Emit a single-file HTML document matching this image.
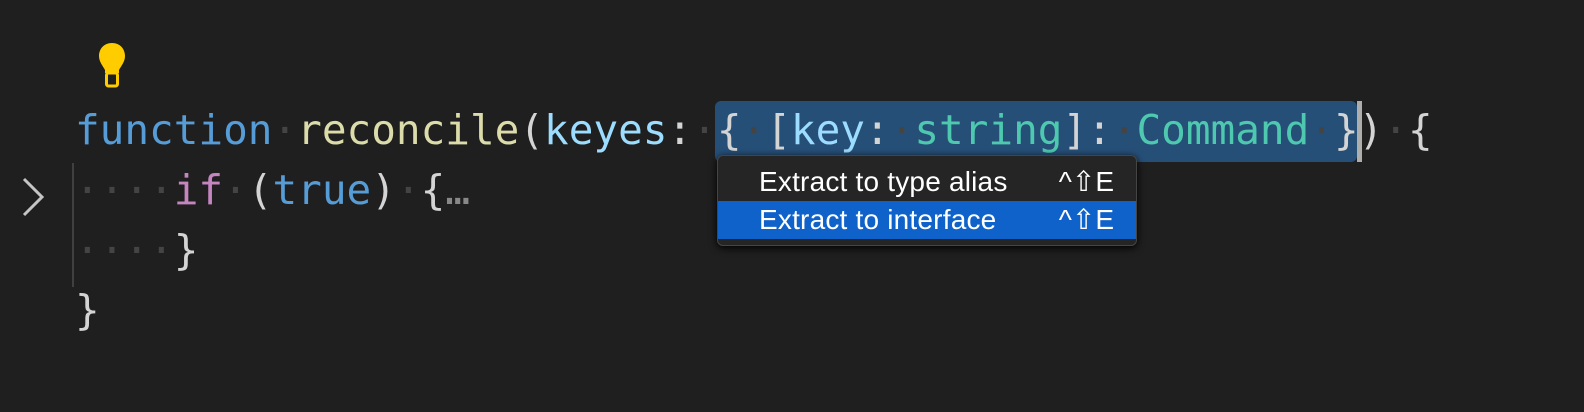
<!DOCTYPE html>
<html><head><style>
body{margin:0;width:1584px;height:412px;background:#1f1f1f;overflow:hidden;position:relative;font-family:"DejaVu Sans Mono",monospace;}
.l{position:absolute;left:75px;height:60px;line-height:60px;font-size:41px;white-space:pre;color:#d4d4d4}
.d{color:#444}
.kw{color:#569cd6}.fn{color:#dcdcaa}.pr{color:#9cdcfe}.ty{color:#4ec9b0}.ctl{color:#c586c0}
.sel{position:absolute;left:715px;top:101px;width:642px;height:61px;background:#264f78;border-radius:6px}
.cur{position:absolute;left:1357px;top:101px;width:5px;height:61px;background:#aeafad}
.menu{position:absolute;left:717px;top:155px;width:418px;height:89px;background:#252526;border:1px solid #454545;border-radius:6px;box-shadow:0 2px 8px #000;font-family:"Liberation Sans",sans-serif;font-size:28px;color:#fff}
.it{position:absolute;left:0;width:418px;height:38px;line-height:38px}
.it span{position:absolute;left:41px;letter-spacing:0.2px}
.it b{position:absolute;right:22px;font-weight:normal}
.guide{position:absolute;left:72px;top:163px;width:2px;height:124px;background:#404040}
</style></head><body>
<svg style="position:absolute;left:96px;top:42px" width="32" height="46" viewBox="0 0 32 46"><path d="M16 1C8 1 3 7 3 14c0 6 4 10 6 14v3h14v-3c2-4 6-8 6-14C29 7 24 1 16 1z" fill="#ffcc00"/><rect x="10.5" y="31" width="11" height="13" rx="2" fill="none" stroke="#ffcc00" stroke-width="3"/></svg>
<div class="sel"></div><div class="cur"></div>
<div class="guide"></div>
<svg style="position:absolute;left:20px;top:176px" width="26" height="42" viewBox="0 0 26 42"><path d="M4 3L22 21L4 39" fill="none" stroke="#c5c5c5" stroke-width="3"/></svg>
<div class="l" style="top:100px"><span class="kw">function</span><span class="d">·</span><span class="fn">reconcile</span>(<span class="pr">keyes</span>:<span class="d">·</span>{<span class="d">·</span>[<span class="pr">key</span>:<span class="d">·</span><span class="ty">string</span>]:<span class="d">·</span><span class="ty">Command</span><span class="d">·</span>})<span class="d">·</span>{</div>
<div class="l" style="top:160px"><span class="d">····</span><span class="ctl">if</span><span class="d">·</span>(<span class="kw">true</span>)<span class="d">·</span>{<span style="color:#888">…</span></div>
<div class="l" style="top:220px"><span class="d">····</span>}</div>
<div class="l" style="top:280px">}</div>
<div class="menu">
<div class="it" style="top:7px"><span>Extract to type alias</span><b>^⇧E</b></div>
<div class="it" style="top:45px;background:#0f62c9"><span>Extract to interface</span><b>^⇧E</b></div>
</div>
</body></html>
